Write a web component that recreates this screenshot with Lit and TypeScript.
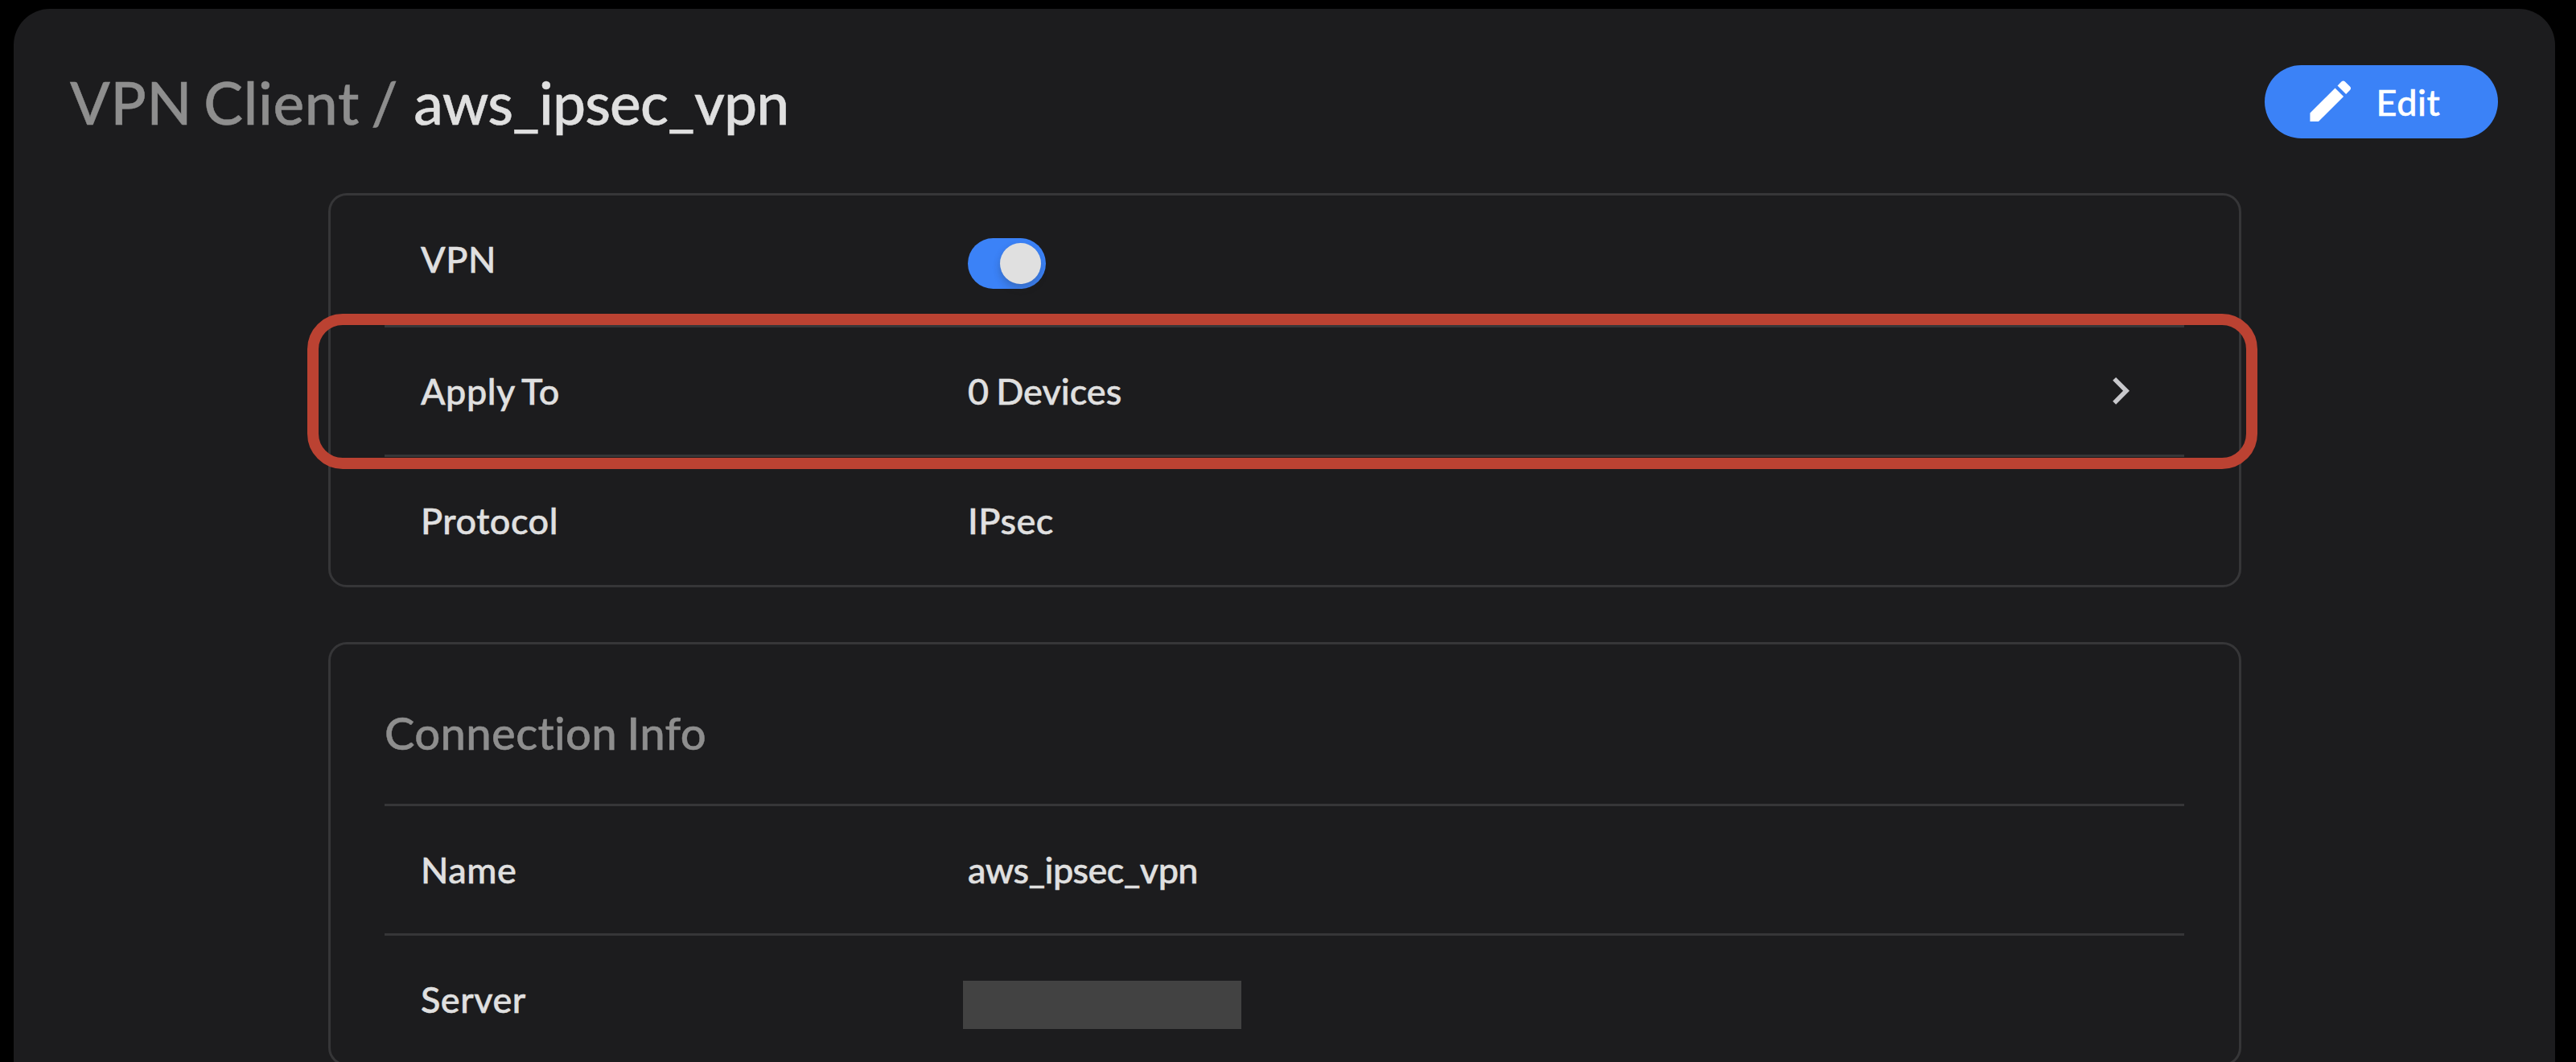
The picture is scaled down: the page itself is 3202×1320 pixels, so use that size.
import { LitElement, html, css, svg, nothing } from 'lit';
import { customElement, property } from 'lit/decorators.js';
import { classMap } from 'lit/directives/class-map.js';

const ICONS = {
  edit: svg`<path d="M3 17.25V21h3.75L17.81 9.94l-3.75-3.75L3 17.25zM20.71 7.04c.39-.39.39-1.02 0-1.41l-2.34-2.34c-.39-.39-1.02-.39-1.41 0l-1.83 1.83 3.75 3.75 1.83-1.83z"/>`,
  chevron: svg`<path d="M10 6 8.59 7.41 13.17 12l-4.58 4.59L10 18l6-6z"/>`,
};

type Row = {
  label: string;
  kind: 'text' | 'toggle' | 'link' | 'masked' | 'id';
  value?: string;
  highlighted?: boolean;
};

const GENERAL: Row[] = [
  { label: 'VPN',      kind: 'toggle' },
  { label: 'Apply To', kind: 'link', value: '0 Devices', highlighted: true },
  { label: 'Protocol', kind: 'text', value: 'IPsec' },
];

const CONNECTION: Row[] = [
  { label: 'Name',   kind: 'id', value: 'aws_ipsec_vpn' },
  { label: 'Server', kind: 'masked' },
];

@customElement('settings-card')
export class SettingsCard extends LitElement {
  @property() heading = '';
  @property({ attribute: false }) rows: Row[] = [];

  private _value(row: Row) {
    switch (row.kind) {
      case 'toggle':
        return html`<span class="toggle" role="switch" aria-checked="true"><span class="knob"></span></span>`;
      case 'masked':
        return html`<span class="mask"></span>`;
      default:
        return html`<span class="value">${row.value}</span>`;
    }
  }

  render() {
    return html`
      <section class="card">
        ${this.heading ? html`<h2 class="heading">${this.heading}</h2>` : nothing}
        ${this.rows.map(row => html`
          <div class=${classMap({ row: true, [row.kind]: true })}>
            <span class="label">${row.label}</span>
            ${this._value(row)}
            ${row.kind === 'link' ? html`<svg class="chevron" viewBox="0 0 24 24">${ICONS.chevron}</svg>` : nothing}
            ${row.highlighted ? html`<div class="highlight"></div>` : nothing}
          </div>
        `)}
      </section>
    `;
  }

  static styles = css`
    :host {
      display: block;
    }
    .card {
      box-sizing: border-box;
      border: 3px solid #363638;
      border-radius: 23px;
      padding: 0 68px 1px 67px;
    }
    .heading {
      box-sizing: border-box;
      height: 198px;
      margin: 0;
      padding-top: 75px;
      font-size: 56.25px;
      line-height: 68px;
      font-weight: 500;
      letter-spacing: 0.3px;
      color: #8e8e8e;
    }
    .row {
      position: relative;
      box-sizing: border-box;
      height: 161px;
      padding: 3px 46px 0 45px;
      display: grid;
      grid-template-columns: 680px 1fr auto;
      align-items: center;
    }
    .row + .row,
    .heading + .row {
      border-top: 3px solid #363638;
      padding-top: 0;
    }
    .label {
      letter-spacing: 0.5px;
    }
    .row.toggle .label {
      margin-top: -7px;
    }
    .row.text .value {
      letter-spacing: 0.5px;
    }
    .row.id .value {
      letter-spacing: -0.6px;
    }
    .row .toggle {
      box-sizing: border-box;
      width: 97px;
      height: 63px;
      margin-top: 5px;
      padding: 6px;
      border-radius: 32px;
      background: #3b82f7;
      display: flex;
      justify-content: flex-end;
    }
    .knob {
      width: 51px;
      height: 51px;
      border-radius: 50%;
      background: #e0e0e0;
      box-shadow: 0 5px 10px rgba(40, 40, 40, 0.25);
    }
    .mask {
      width: 346px;
      height: 60px;
      margin: 14px 0 0 -6px;
      background: #424242;
    }
    .chevron {
      width: 67.5px;
      height: 67.5px;
      fill: #c8c8cc;
    }
    .highlight {
      position: absolute;
      inset: -17px -91px -18px -96px;
      border: 14px solid #bb4232;
      border-radius: 44px;
    }
  `;
}

@customElement('app-root')
export class AppRoot extends LitElement {
  render() {
    return html`
      <main class="panel">
        <header class="header">
          <h1 class="title"><span class="parent">VPN Client /</span><span class="name">aws_ipsec_vpn</span></h1>
          <button class="edit">
            <svg class="icon" viewBox="0 0 24 24">${ICONS.edit}</svg>
            Edit
          </button>
        </header>
        <div class="cards">
          <settings-card .rows=${GENERAL}></settings-card>
          <settings-card heading="Connection Info" .rows=${CONNECTION}></settings-card>
        </div>
      </main>
    `;
  }

  static styles = css`
    :host {
      display: block;
      box-sizing: border-box;
      height: 1320px;
      padding: 11px 26px 0 17px;
      overflow: hidden;
      background: #000;
      color: #e0e0e0;
      font-family: Lato, 'Open Sans', sans-serif;
      font-size: 45px;
      font-weight: 500;
      font-variant-ligatures: none;
      line-height: 54px;
      word-spacing: -0.05em;
      -webkit-text-stroke: 0.5px currentColor;
    }
    .panel {
      box-sizing: border-box;
      height: 1400px;
      border-radius: 45px 45px 0 0;
      background: #1c1c1e;
    }
    .header {
      box-sizing: border-box;
      height: 229px;
      padding: 70px 71px 0 70px;
      display: flex;
      justify-content: space-between;
      align-items: flex-start;
    }
    .title {
      margin: 2px 0 0;
      display: flex;
      gap: 19px;
      font-size: 73.125px;
      line-height: 88px;
      font-weight: 500;
    }
    .parent {
      color: #8e8e8e;
      letter-spacing: 0.7px;
      word-spacing: -5px;
    }
    .name {
      letter-spacing: -0.85px;
    }
    .edit {
      box-sizing: border-box;
      width: 290px;
      height: 91px;
      padding: 0 0 0 48px;
      border: 0;
      border-radius: 46px;
      background: #3b82f7;
      color: #fff;
      font: inherit;
      letter-spacing: 0.6px;
      display: flex;
      align-items: center;
      gap: 23px;
    }
    .icon {
      width: 67.5px;
      height: 67.5px;
      margin-top: -1px;
      fill: #fff;
      stroke: none;
    }
    .cards {
      padding: 0 390px 0 391px;
      display: flex;
      flex-direction: column;
      gap: 68px;
    }
  `;
}
